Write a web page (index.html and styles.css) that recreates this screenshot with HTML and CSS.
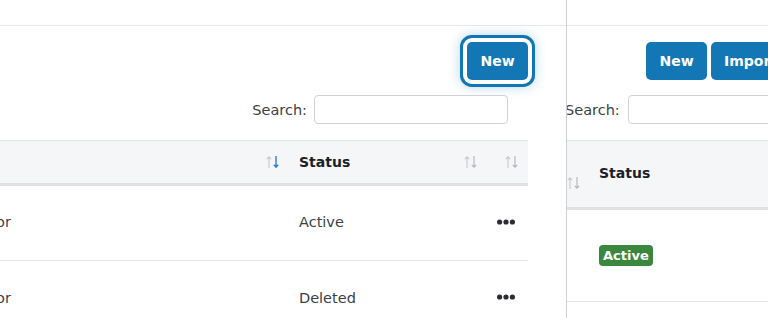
FILE: index.html
```html
<!DOCTYPE html>
<html lang="en">
<head>
    <meta charset="UTF-8">
    <meta name="viewport" content="width=device-width, initial-scale=1.0">
    <title>Users</title>
    <link rel="stylesheet" href="styles.css">
</head>
<body>
    <div class="pane pane-left">
        <div class="topbar"></div>
        <div class="content">
            <div class="toolbar">
                <button class="btn btn-focus">New</button>
            </div>
            <div class="search-row">
                <label class="search-label" for="searchLeft">Search:</label>
                <input type="search" id="searchLeft" class="search-input">
            </div>
            <table class="data-table">
                <thead>
                    <tr>
                        <th class="col-role">
                            <div class="th-inner">
                                <span>Role</span>
                                <svg class="sort-icon sort-desc" width="13" height="14" viewBox="0 0 13 14">
                                    <path class="up" d="M3 13V2M0.8 4.2L3 1.8L5.2 4.2" />
                                    <path class="down" d="M10 1V12M7.8 9.8L10 12.2L12.2 9.8" />
                                </svg>
                            </div>
                        </th>
                        <th class="col-status">
                            <div class="th-inner">
                                <span>Status</span>
                                <svg class="sort-icon" width="13" height="14" viewBox="0 0 13 14">
                                    <path class="up" d="M3 13V2M0.8 4.2L3 1.8L5.2 4.2" />
                                    <path class="down" d="M10 1V12M7.8 9.8L10 12.2L12.2 9.8" />
                                </svg>
                            </div>
                        </th>
                        <th class="col-actions">
                            <div class="th-inner">
                                <span></span>
                                <svg class="sort-icon" width="13" height="14" viewBox="0 0 13 14">
                                    <path class="up" d="M3 13V2M0.8 4.2L3 1.8L5.2 4.2" />
                                    <path class="down" d="M10 1V12M7.8 9.8L10 12.2L12.2 9.8" />
                                </svg>
                            </div>
                        </th>
                    </tr>
                </thead>
                <tbody>
                    <tr>
                        <td>Administrator</td>
                        <td>Active</td>
                        <td class="actions">
                            <svg width="18" height="6" viewBox="0 0 18 6"><circle cx="2.6" cy="3" r="2.6"/><circle cx="9" cy="3" r="2.6"/><circle cx="15.4" cy="3" r="2.6"/></svg>
                        </td>
                    </tr>
                    <tr>
                        <td>Administrator</td>
                        <td>Deleted</td>
                        <td class="actions">
                            <svg width="18" height="6" viewBox="0 0 18 6"><circle cx="2.6" cy="3" r="2.6"/><circle cx="9" cy="3" r="2.6"/><circle cx="15.4" cy="3" r="2.6"/></svg>
                        </td>
                    </tr>
                </tbody>
            </table>
        </div>
    </div>

    <div class="pane pane-right">
        <div class="topbar"></div>
        <div class="content">
            <div class="toolbar">
                <button class="btn">New</button>
                <button class="btn">Import</button>
            </div>
            <div class="search-row">
                <label class="search-label" for="searchRight">Search:</label>
                <input type="search" id="searchRight" class="search-input">
            </div>
            <table class="data-table">
                <thead>
                    <tr>
                        <th class="col-prev">
                            <div class="th-inner">
                                <span></span>
                                <svg class="sort-icon" width="13" height="14" viewBox="0 0 13 14">
                                    <path class="up" d="M3 13V2M0.8 4.2L3 1.8L5.2 4.2" />
                                    <path class="down" d="M10 1V12M7.8 9.8L10 12.2L12.2 9.8" />
                                </svg>
                            </div>
                        </th>
                        <th class="col-state">Status</th>
                    </tr>
                </thead>
                <tbody>
                    <tr>
                        <td></td>
                        <td><span class="badge">Active</span></td>
                    </tr>
                </tbody>
            </table>
        </div>
    </div>
</body>
</html>
```

FILE: styles.css
```css
* {
    box-sizing: border-box;
    margin: 0;
    padding: 0;
}

body {
    font-family: 'DejaVu Sans', 'Noto Sans', sans-serif;
    font-size: 14.5px;
    color: #3b3f46;
    background: #fff;
    display: flex;
    height: 100vh;
    overflow: hidden;
}

.pane {
    overflow: hidden;
    height: 100%;
}

.pane-left {
    width: 567px;
    flex-shrink: 0;
    border-right: 1px solid #cdd0d4;
}

.pane-right {
    flex: 1;
}

.topbar {
    height: 26px;
    border-bottom: 1px solid #e6e7ea;
}

/* left pane */
.pane-left .content {
    width: 528px;
}

.toolbar {
    display: flex;
    gap: 4px;
    padding-top: 16px;
}

.pane-left .toolbar {
    justify-content: flex-end;
}

.btn {
    flex-shrink: 0;
    height: 38px;
    padding: 0 13px;
    background-color: #1277b4;
    color: #fff;
    border: none;
    border-radius: 5px;
    font-family: 'DejaVu Sans', 'Noto Sans', sans-serif;
    font-size: 14px;
    font-weight: 700;
    cursor: pointer;
}

.pane-left .btn,
.pane-right .btn:first-child {
    width: 61px;
    padding: 0;
}

.btn-focus {
    box-shadow: 0 0 0 4px #fff, 0 0 0 7px #1176b3, 0 0 12px 7px rgba(17, 118, 179, 0.3);
}

.search-row {
    display: flex;
    align-items: center;
    gap: 7px;
    margin-top: 15px;
}

.pane-left .search-row {
    justify-content: flex-end;
    padding-right: 20px;
}

.search-label {
    flex-shrink: 0;
    color: #3b3f46;
}

.search-input {
    flex-shrink: 0;
    width: 194px;
    height: 29px;
    border: 1px solid #cfd3d9;
    border-radius: 4px;
    background: #fff;
}

.data-table {
    border-collapse: collapse;
    margin-top: 16px;
    table-layout: fixed;
}

.pane-left .data-table {
    width: 628px;
    margin-left: -100px;
}

.data-table th {
    background-color: #f5f6f8;
    border-top: 1px solid #e2e4e8;
    border-bottom: 3px solid #dfe1e5;
    height: 44px;
    padding: 0 8px 0 12px;
    text-align: left;
    font-size: 14px;
    font-weight: 600;
    color: #1b1f27;
}

.th-inner {
    display: flex;
    align-items: center;
    justify-content: space-between;
}

.col-role {
    width: 387px;
}

.col-status {
    width: 198px;
}

.col-actions {
    width: 43px;
}

.pane-left .col-actions {
    padding-right: 10px;
}

.sort-icon path {
    fill: none;
    stroke-width: 1.1;
}

.sort-icon .up {
    stroke: #c6c9ce;
}

.sort-icon .down {
    stroke: #b0b4ba;
}

.sort-desc .down {
    stroke: #2f7fd2;
    stroke-width: 1.4;
}

.data-table td {
    height: 76px;
    padding: 0 12px;
    border-bottom: 1px solid #e2e4e8;
    white-space: nowrap;
    overflow: hidden;
}

.pane-left .data-table td {
    padding-bottom: 2px;
}

.actions {
    text-align: right;
}

.actions svg {
    display: inline-block;
    vertical-align: middle;
    fill: #2a2c31;
    margin-right: 2px;
    margin-bottom: 3px;
}

/* right pane */
.pane-right .toolbar {
    padding-left: 79px;
}

.pane-right .search-row {
    margin-left: -2px;
    gap: 8px;
}

.pane-right .data-table {
    width: 420px;
    margin-left: -21px;
}

.col-prev {
    width: 42px;
}

.pane-right .data-table th {
    height: 68px;
}

.pane-right .col-prev .th-inner {
    margin-top: 18px;
}

.pane-right .col-state {
    padding-left: 11px;
    padding-bottom: 2px;
}

.pane-right .data-table td {
    height: 93px;
    padding-left: 11px;
}

.badge {
    display: inline-block;
    background-color: #3a873e;
    color: #fff;
    font-size: 13px;
    font-weight: 700;
    line-height: 21px;
    padding: 0 4px;
    border-radius: 4px;
}
```
